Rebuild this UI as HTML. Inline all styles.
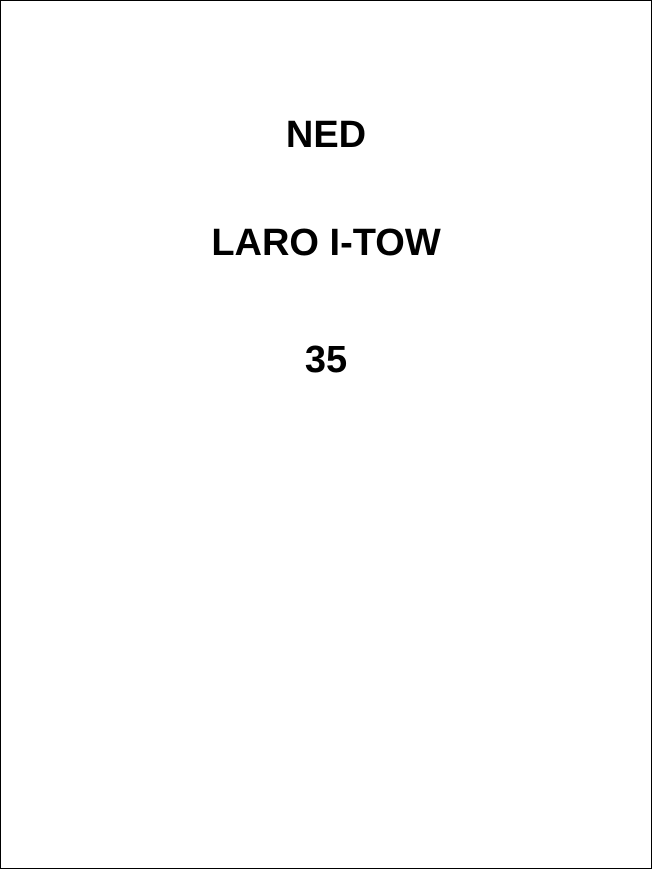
<!DOCTYPE html>
<html><head><style>
html,body{margin:0;padding:0;background:#fff;}
.box{position:absolute;left:0;top:0;width:650px;height:867px;border:1px solid #000;}
.t{position:absolute;left:0;width:652px;text-align:center;font-family:"Liberation Sans",sans-serif;font-weight:bold;font-size:38px;color:#000;line-height:40px;}
</style></head><body>
<div class="box"></div>
<div class="t" style="top:115px">NED</div>
<div class="t" style="top:223px">LARO I-TOW</div>
<div class="t" style="top:340px">35</div>
</body></html>
